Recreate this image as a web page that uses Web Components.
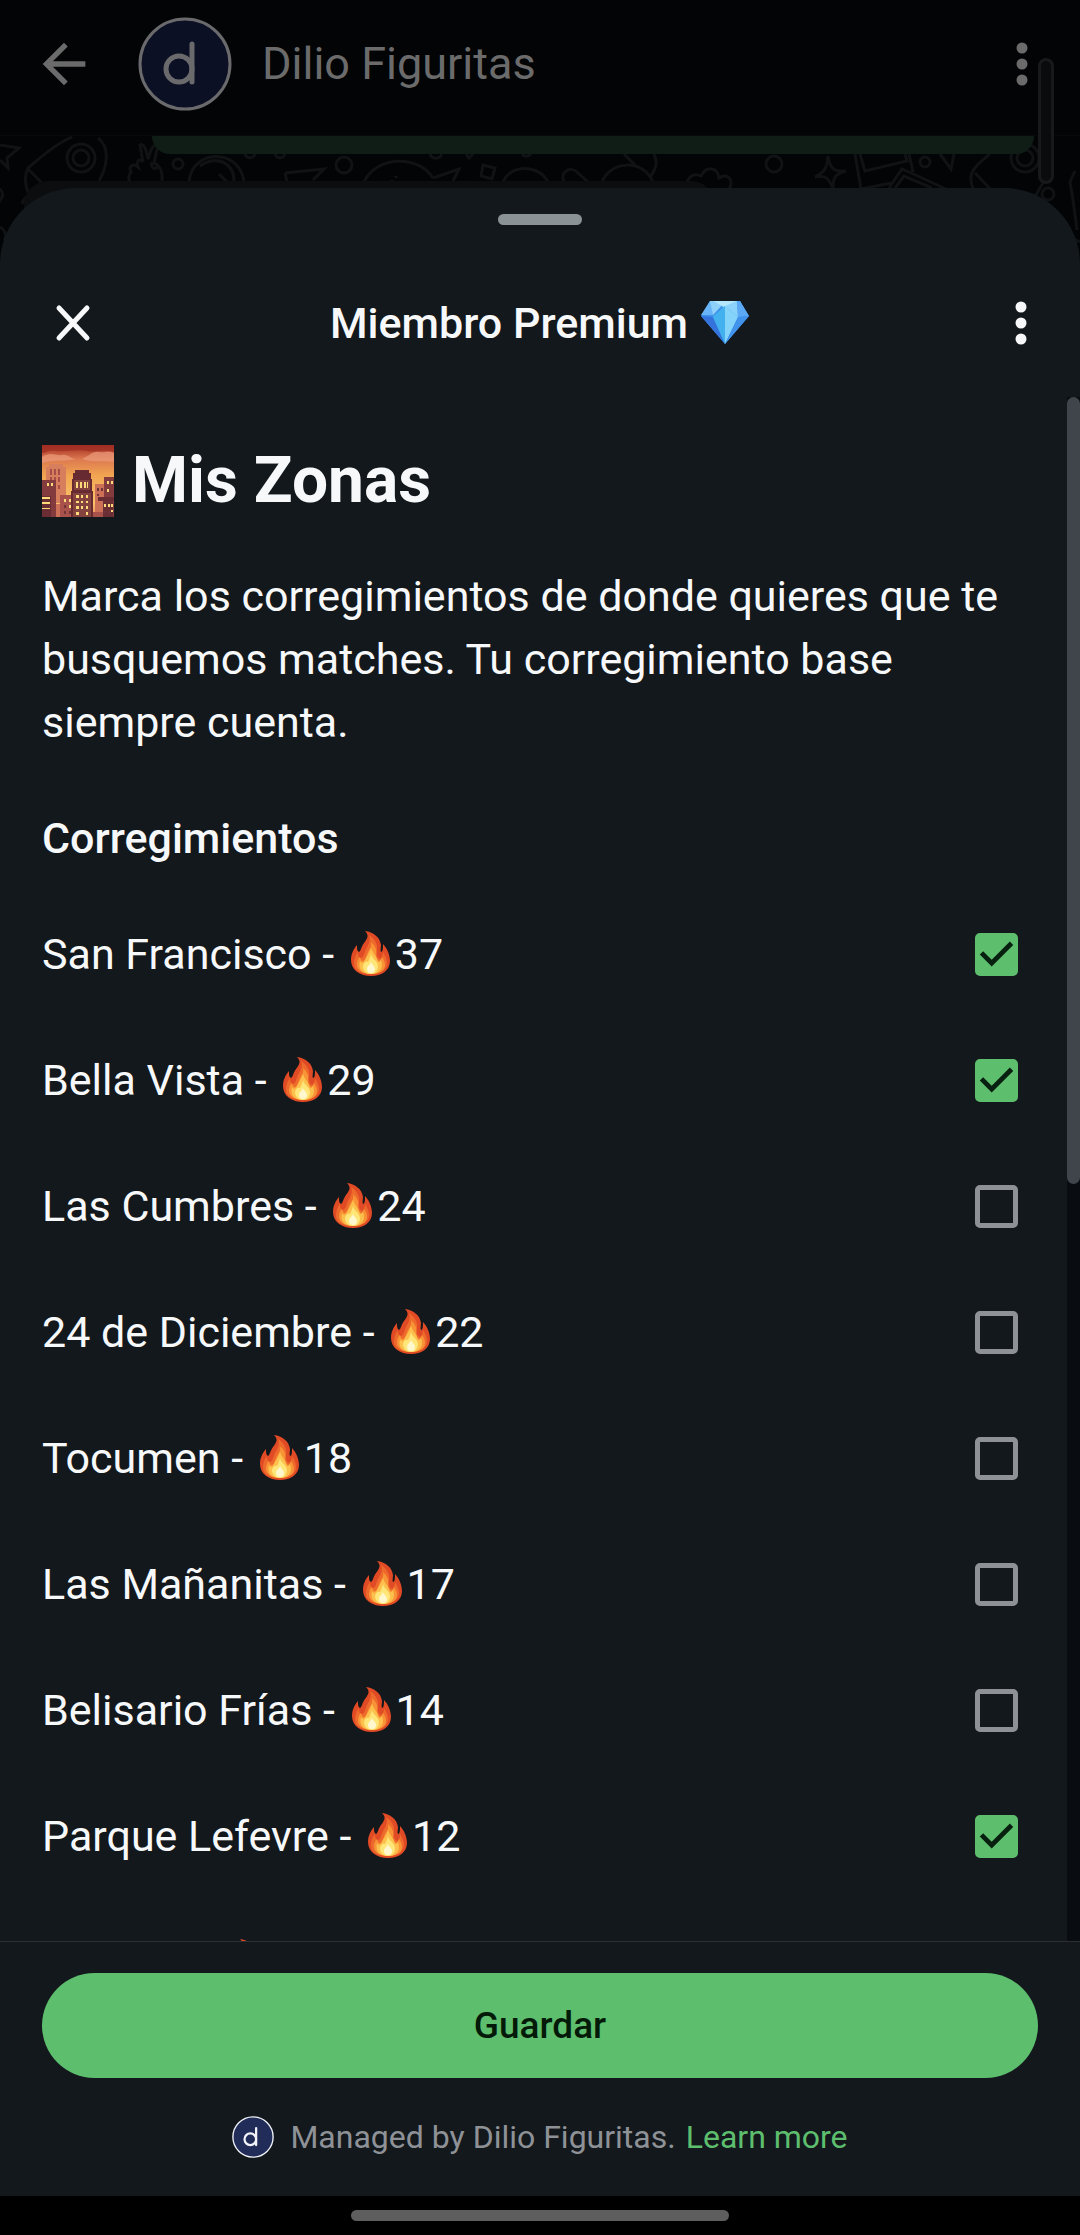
<!DOCTYPE html>
<html lang="es">
<head>
<meta charset="utf-8">
<meta name="viewport" content="width=device-width, initial-scale=1">
<title>Mis Zonas</title>
<style>
  html, body { height: 100%; }
  body {
    margin: 0;
    display: flex;
    flex-direction: column;
    background: #000;
    color: #f7f8fa;
    font-family: Roboto, "Noto Sans", sans-serif;
    font-size: 43px;
  }
</style>
</head>
<body>

<chat-bar nombre="Dilio Figuritas"></chat-bar>
<chat-fondo></chat-fondo>

<hoja-inferior>
  <span slot="titulo">Miembro Premium</span>
  <icono-emoji slot="titulo" tipo="diamante"></icono-emoji>

  <zonas-lista>
    <zona-item nombre="San Francisco" total="37" marcada></zona-item>
    <zona-item nombre="Bella Vista" total="29" marcada></zona-item>
    <zona-item nombre="Las Cumbres" total="24"></zona-item>
    <zona-item nombre="24 de Diciembre" total="22"></zona-item>
    <zona-item nombre="Tocumen" total="18"></zona-item>
    <zona-item nombre="Las Mañanitas" total="17"></zona-item>
    <zona-item nombre="Belisario Frías" total="14"></zona-item>
    <zona-item nombre="Parque Lefevre" total="12" marcada></zona-item>
    <zona-item nombre="Betania" total="11"></zona-item>
  </zonas-lista>

  <pie-hoja slot="pie" empresa="Dilio Figuritas">Guardar</pie-hoja>
</hoja-inferior>

<barra-sistema></barra-sistema>

<script>
// Pequeña base: cada elemento clona su plantilla en un shadow root abierto
class ElementoBase extends HTMLElement {
  constructor() {
    super();
    const plantilla = document.createElement('template');
    plantilla.innerHTML = this.constructor.html;
    this._shadow = this.attachShadow({ mode: 'open' });
    this._shadow.appendChild(plantilla.content.cloneNode(true));
  }
}

// ---------- iconos ----------

const SVG_FUEGO = `
  <svg class="fuego" viewBox="0 0 50 50" role="img" aria-label="fuego">
    <path fill="#e04a25" d="M20 2c8 1 15 6 16 14 0 3-1 5 0 7 2 0 2-4 2-8 4 4 7 11 7 17 0 9-8 15-19 15S6 41 6 31c0-6 2-10 6-15 0 4 0 6 2 7 2-1 2-5 5-9 4-5 5-8 1-12z"/>
    <path fill="#ee6a2c" d="M24 6c6 4 9 9 8 16 0 4 0 6 3 8 2-1 3-4 3-7 3 5 4 8 4 11 0 7-7 11-16 11S9 42 9 35c0-5 1-8 4-12 0 4 1 6 3 6 3-1 3-5 5-9 3-5 5-9 3-14z"/>
    <path fill="#f99436" d="M26 13c4 4 6 7 5 12 0 4 1 6 3 7 2-1 2-2 3-4 2 3 3 5 3 8 0 6-6 9-14 9s-14-4-14-9c0-4 1-6 3-8 1 3 1 4 3 4 3-1 3-5 5-9 2-3 4-6 3-10z"/>
    <path fill="#fdc04d" d="M26 19c2 6 6 8 7 14 2 0 2-1 3-2 3 8-1 14-10 14S13 40 15 32c1 2 2 2 4 1 2-5 5-8 7-14z"/>
    <path fill="#ffe679" d="M26 25c1 5 6 6 7 12 0 5-3 8-7 8s-8-3-8-8c1-4 3-5 5-4 1-2 2-4 3-8z"/>
    <path fill="#fff8cf" d="M26 33c1 3 4 4 4 7s-2 4-4 4-4-1-4-4 3-4 4-7z"/>
  </svg>
`;

const SVG_DIAMANTE = `
  <svg viewBox="0 0 50 50">
    <path fill="#3f92ea" d="M10 3h30l9 15-24 28L1 18z"/>
    <path fill="#67b5f8" d="M10 3h9l-6 14H1z"/>
    <path fill="#8dd0fa" d="M10 3h16L13 17z"/>
    <path fill="#b4e7fb" d="M14 3h23L25 10z"/>
    <path fill="#48c1f1" d="M25 8l13 11H13z"/>
    <path fill="#8bd3fb" d="M37 3l1 16-13-11z"/>
    <path fill="#5ba9f4" d="M37 3h3l9 15-11 1z"/>
    <path fill="#3473dc" d="M1 18l12 1 12 27z"/>
    <path fill="#42b1ee" d="M13 19l12-11v38z"/>
    <path fill="#83d3fb" d="M25 8l13 11-13 27z"/>
    <path fill="#4193eb" d="M38 19l11-1-24 28z"/>
  </svg>
`;

const SVG_CIUDAD = `
  <svg viewBox="0 0 72 72">
    <defs>
      <linearGradient id="cielo" x1="0" y1="0" x2="0" y2="1">
        <stop offset="0" stop-color="#a12c20"/><stop offset=".2" stop-color="#dd7950"/><stop offset=".42" stop-color="#f1a451"/><stop offset=".8" stop-color="#fbc469"/><stop offset="1" stop-color="#e78c60"/>
      </linearGradient>
    </defs>
    <path fill="url(#cielo)" d="M0 0h72v72H0z"/>
    <path fill="#9f2e22" d="M0 0h72v7c-12-3-17 1-27-1S24 7 14 6 4 9 0 8z" opacity=".7"/>
    <path fill="#e99a7a" d="M0 12c8-6 14-1 20-2s8 4 14 4c-9 3-20 0-34 4zM40 14c8-3 10-8 17-7s9-2 15 1v9c-10-2-20 1-32-3z" opacity=".75"/>
    <path fill="#d77e5c" d="M4 22h3v-3h14v3h3v36H4z"/>
    <path fill="#a54d46" d="M8 24h2v6H8zm4 0h2v6h-2zm4 0h2v6h-2zM8 32h2v5H8zm4 0h2v5h-2zm4 0h2v5h-2zM8 40h2v4H8zm4 0h2v4h-2zm4 0h2v4h-2z"/>
    <path fill="#cc7057" d="M53 39h9v33h-9zM10 59h10v13H10z"/>
    <path fill="#843b3e" d="M0 35h14v37H0zM62 32h10v40H62z"/>
    <path fill="#a9524b" d="M18 50h13v22H18zM50 67h12v5H50z"/>
    <path fill="#662a30" d="M33 25h14v3h2v6h1v12h1v26H29V46h1V34h1v-6h2z"/>
    <path fill="#85433f" d="M32 35h16v10H32zM31 48h18v24H31z"/>
    <path fill="#6a2d33" d="M0 51h9v21H0zM56 52h16v4h-1v16H61V56h-5z"/>
    <path fill="#ffdc7a" d="M34 37h2v6h-2zm4 0h2v6h-2zm4 0h2v6h-2zm3 0h1v6h-1zM34 50h3v3h-3zm5 0h2v3h-2zm5 0h2v3h-2zM34 56h3v2h-3zm5 0h2v2h-2zm5 0h2v2h-2zM34 61h3v3h-3zm5 0h2v3h-2zm5 0h2v3h-2zM34 67h3v3h-3zm10 0h2v3h-2zM0 52h8v2H0zm0 5h8v2H0zm0 6h8v1H0zM5 38h2v3H5zm4 0h2v3H9zM22 54h2v3h-2zm5 0h2v3h-2zm0 6h2v3h-2zM65 36h2v3h-2zm4 0h2v3h-2zm-4 8h2v3h-2zm-3 15h2v3h-2zm4 0h2v3h-2zm3 0h2v3h-2zm0 6h2v2h-2z"/>
    <path fill="#713439" d="M22 60h2v3h-2zm0 6h2v3h-2zm5 0h2v3h-2zM55 43h2v3h-2zm4 0h2v3h-2zm-4 6h2v2h-2zM61 66h3v2h-3zm5 0h2v2h-2z"/>
  </svg>
`;

const EMOJIS = {
  diamante: { nombre: 'diamante', svg: SVG_DIAMANTE },
  ciudad: { nombre: 'ciudad al atardecer', svg: SVG_CIUDAD }
};

class IconoEmoji extends HTMLElement {
  constructor() {
    super();
    this._shadow = this.attachShadow({ mode: 'open' });
  }

  connectedCallback() {
    const emoji = EMOJIS[this.getAttribute('tipo')];
    this.setAttribute('role', 'img');
    this.setAttribute('aria-label', emoji.nombre);
    this._shadow.innerHTML = `
      <style>
        :host { display: block; flex: none; width: 50px; height: 50px; }
        :host([tipo="ciudad"]) { width: 72px; height: 72px; }
        svg { display: block; width: 100%; height: 100%; }
      </style>
      ${emoji.svg}
    `;
  }
}
customElements.define('icono-emoji', IconoEmoji);

class LogoDilio extends ElementoBase {
  static html = `
    <style>
      :host { display: block; flex: none; width: 42px; height: 42px; }
      svg { display: block; width: 100%; height: 100%; }
      .disco { fill: var(--logo-fondo, #212c58); stroke: var(--logo-trazo, #f2f4fa); stroke-width: 3; }
      .marca { fill: none; stroke: var(--logo-trazo, #f2f4fa); stroke-width: 5; stroke-linecap: round; }
    </style>
    <svg viewBox="0 0 94 94" aria-hidden="true">
      <circle class="disco" cx="47" cy="47" r="45"/>
      <g class="marca"><circle cx="41" cy="52" r="13"/><line x1="54" y1="27" x2="54" y2="65"/></g>
    </svg>
  `;
}
customElements.define('logo-dilio', LogoDilio);

class BotonMenu extends ElementoBase {
  static html = `
    <style>
      :host { display: block; flex: none; }
      button { display: block; padding: 0; border: 0; background: none; color: inherit; cursor: pointer; }
      svg { display: block; width: 64px; height: 64px; }
    </style>
    <button type="button" aria-label="Más opciones">
      <svg viewBox="0 0 64 64" fill="currentColor">
        <circle cx="32" cy="16" r="5.5"/><circle cx="32" cy="32" r="5.5"/><circle cx="32" cy="48" r="5.5"/>
      </svg>
    </button>
  `;
}
customElements.define('boton-menu', BotonMenu);

// ---------- chat oscurecido detrás de la hoja ----------

class ChatBar extends ElementoBase {
  static html = `
    <style>
      :host {
        --logo-fondo: #0c1024;
        --logo-trazo: #6a6a6d;
        display: flex;
        flex: none;
        align-items: center;
        box-sizing: border-box;
        height: 136px;
        padding: 0 26px 8px 32px;
        background: #020406;
        color: #6b6b6b;
        border-bottom: 1px solid #07090b;
      }
      button { padding: 0; border: 0; background: none; color: inherit; cursor: pointer; }
      button svg { display: block; width: 64px; height: 64px; }
      logo-dilio { width: 94px; height: 94px; margin: 0 30px 0 42px; }
      .nombre { flex: 1; font-size: 45px; line-height: 64px; }
    </style>
    <button type="button" aria-label="Volver">
      <svg viewBox="0 0 24 24" fill="currentColor"><path d="M20 11H7.830l5.590-5.590L12 4l-8 8 8 8 1.410-1.410L7.830 13H20v-2z"/></svg>
    </button>
    <logo-dilio></logo-dilio>
    <span class="nombre"></span>
    <boton-menu></boton-menu>
  `;

  connectedCallback() {
    this._shadow.querySelector('.nombre').textContent = this.getAttribute('nombre') || '';
  }
}
customElements.define('chat-bar', ChatBar);

class ChatFondo extends ElementoBase {
  static html = `
    <style>
      :host {
        display: flex;
        flex: none;
        flex-direction: column;
        position: relative;
        height: 130px;
        background: #020406;
        overflow: hidden;
      }
      /* los dibujos quedan debajo de las burbujas */
      .dibujos { position: absolute; inset: 0; width: 100%; height: 100%; }
      .enviado { position: relative; height: 18px; margin: 0 46px 27px 152px; border-radius: 0 0 30px 30px; background: #101d17; }
      .recibido { position: relative; height: 85px; width: 64%; margin-left: 24px; border-radius: 24px 24px 0 0; background: #0b0d0f; }
    </style>
    <svg class="dibujos" viewBox="0 0 1080 130" preserveAspectRatio="xMidYMin slice" fill="none" stroke="#101214" stroke-width="3" aria-hidden="true">
      <path d="M0 9l19 3-12 10 1 10-8-8M72 1C56 8 42 20 28 32c-4 8-3 16 0 24 4 8 12 7 18 2M98 2c12 9 10 27 1 43M28 33l24 24"/>
      <circle cx="81" cy="22" r="14"/><circle cx="81" cy="22" r="8"/>
      <path d="M143 26l-3-17c4-2 6 4 8 14 3-11 6-16 10-14l-4 18c5 2 9 8 8 18M143 26c-4-5-7 0-5 5-5-4-10-1-7 5-3 3-3 8 0 11M152 26c-2 6 3 8 6 5"/>
      <circle cx="178" cy="28" r="5"/><path d="M189 46c3-34 51-34 55 0M200 30c16-11 34-4 34 15M219 38l8 8"/>
      <path d="M285 37l39-4-11 11M285 37l2 9"/><circle cx="344" cy="29" r="8"/>
      <path d="M364 46c12-26 54-28 69-4M433 42l26-9-6 12M392 44v1M396 40v2"/>
      <path d="M483 29l12 3-3 11-11-3zM503 46c7-18 36-18 45 0M245 18c2 5 8 5 10 0M275 18c2 5 8 5 10 0M430 18c2 6 10 5 12 0M466 18l3 4 4-4M522 18c3 4 8 2 9-1"/>
      <path d="M564 46c-5-10 7-17 14-9l10 9M602 46c8-21 41-24 51 0M624 18l12 12M654 18c4 9 2 15-4 23M687 46c3-7 8-9 14-6 5-10 16-10 18 2 10-7 16 5 9 12"/>
      <circle cx="774" cy="28" r="8"/><path d="M828 20c2 13 6 16 18 15-11 3-13 6-13 18-4-11-7-14-18-12 10-5 12-9 13-21z"/>
      <path d="M855 18l6 35M860 18l5 17 42-10-2-7M909 18l4 18M861 53l30-6M889 52l13-19 44 20M895 52l9-12 28 12"/>
      <circle cx="925" cy="26" r="5"/><path d="M940 18l11 15 3-15M990 18c-24 18-20 25-17 35M975 37l23 24M1044 45l-15 26M1075 35l-5 11 3 18 4 30M1070 101l10 5"/>
      <circle cx="1025" cy="22" r="14"/><circle cx="1025" cy="22" r="8"/><circle cx="1048" cy="58" r="6"/>
      <path d="M22 68c3-10 11-9 15-5M0 53c5 5 2 9-1 13M0 91c6 4 7 9 4 13"/>
    </svg>
    <div class="enviado"></div>
    <div class="recibido"></div>
  `;
}
customElements.define('chat-fondo', ChatFondo);

// ---------- hoja ----------

class HojaInferior extends ElementoBase {
  static html = `
    <style>
      :host {
        display: flex;
        flex: 1;
        flex-direction: column;
        position: relative;
        min-height: 0;
        margin-top: -78px;
        border-radius: 76px 76px 0 0;
        background: #13181c;
      }
      .asa { flex: none; align-self: center; width: 84px; height: 11px; margin: 26px 0 24px; border-radius: 6px; background: #8b9296; }
      /* indicador de desplazamiento del chat, asoma sobre la barra */
      .riel { position: absolute; top: -130px; right: 26px; box-sizing: border-box; width: 16px; height: 126px; border: 3px solid #17191a; border-radius: 8px; background: #090b0c; }
      header { display: grid; grid-template-columns: 64px 1fr 64px; align-items: center; flex: none; height: 148px; padding: 0 27px 0 41px; }
      button { padding: 0; border: 0; background: none; color: inherit; cursor: pointer; }
      button svg { display: block; width: 64px; height: 64px; }
      .titulo { display: flex; align-items: center; justify-content: center; gap: 12px; margin: 0; padding-right: 14px; font-size: 43px; line-height: 63px; font-weight: 500; }
      main { flex: 1; min-height: 0; display: flex; }
    </style>
    <div class="riel"></div>
    <div class="asa"></div>
    <header>
      <button type="button" aria-label="Cerrar">
        <svg viewBox="0 0 64 64" stroke="currentColor" stroke-width="5" stroke-linecap="round"><path d="M18 17l28 30M46 17l-28 30"/></svg>
      </button>
      <h2 class="titulo"><slot name="titulo"></slot></h2>
      <boton-menu></boton-menu>
    </header>
    <main><slot></slot></main>
    <slot name="pie"></slot>
  `;
}
customElements.define('hoja-inferior', HojaInferior);

class ZonasLista extends ElementoBase {
  static html = `
    <style>
      :host { display: flex; flex: 1; min-height: 0; min-width: 0; }
      .contenido { flex: 1; min-width: 0; overflow-y: auto; scrollbar-width: none; box-sizing: border-box; padding: 42px 49px 0 42px; }
      h1 { display: flex; align-items: center; gap: 18px; margin: 0 0 42px; font-size: 64px; line-height: 84px; font-weight: 700; }
      p { margin: 0 0 53px; line-height: 63px; }
      h2 { margin: 0 0 21px; font-size: 43px; line-height: 63px; font-weight: 500; }
      .carril { flex: none; width: 13px; background: #090d11; }
      .pulgar { height: 51%; border-radius: 7px; background: #3f454b; }
    </style>
    <div class="contenido">
      <h1><icono-emoji tipo="ciudad"></icono-emoji><span>Mis Zonas</span></h1>
      <p>Marca los corregimientos de donde quieres que te busquemos matches. Tu corregimiento base siempre cuenta.</p>
      <h2>Corregimientos</h2>
      <slot></slot>
    </div>
    <div class="carril"><div class="pulgar"></div></div>
  `;
}
customElements.define('zonas-lista', ZonasLista);

class ZonaItem extends ElementoBase {
  static html = `
    <style>
      :host { display: block; }
      label { display: grid; grid-template-columns: auto auto auto 1fr; align-items: center; height: 126px; line-height: 63px; cursor: pointer; }
      .nombre { white-space: pre; }
      .fuego { display: block; width: 50px; height: 50px; }
      .caja { display: grid; justify-self: end; width: 43px; height: 43px; }
      input, .marca { grid-area: 1 / 1; width: 43px; height: 43px; }
      input { appearance: none; box-sizing: border-box; margin: 0; border: 5px solid #8e9297; border-radius: 5px; }
      input:checked { border-color: #5dbe6e; background: #5dbe6e; }
      .marca { display: none; fill: #08200f; pointer-events: none; }
      input:checked + .marca { display: block; }
    </style>
    <label>
      <span class="nombre"></span>
      ${SVG_FUEGO}
      <span class="total"></span>
      <span class="caja">
        <input type="checkbox">
        <svg class="marca" viewBox="0 0 18 18" aria-hidden="true"><path d="M7 14L2 9l1.410-1.410L7 11.170l7.590-7.590L16 5z"/></svg>
      </span>
    </label>
  `;

  connectedCallback() {
    this._shadow.querySelector('.nombre').textContent = this.getAttribute('nombre') + ' - ';
    this._shadow.querySelector('.total').textContent = this.getAttribute('total');
    const casilla = this._shadow.querySelector('input');
    casilla.checked = this.hasAttribute('marcada');
    casilla.addEventListener('change', () => this.toggleAttribute('marcada', casilla.checked));
  }
}
customElements.define('zona-item', ZonaItem);

class PieHoja extends ElementoBase {
  static html = `
    <style>
      :host { display: block; flex: none; padding: 31px 42px 38px; border-top: 1px solid #2b3034; }
      button { display: block; width: 100%; height: 105px; padding: 0; border: 0; border-radius: 53px; background: #5dbe6e; color: #041a08; font-family: inherit; font-size: 37px; font-weight: 500; cursor: pointer; }
      .gestion { display: flex; align-items: center; justify-content: center; margin-top: 38px; font-size: 32px; line-height: 42px; color: #8e9297; }
      logo-dilio { margin-right: 16px; }
      a { margin-left: 10px; color: #5dbe6e; text-decoration: none; }
    </style>
    <button type="button"><slot></slot></button>
    <div class="gestion">
      <logo-dilio></logo-dilio>
      <span class="texto"></span>
      <a href="#info">Learn more</a>
    </div>
  `;

  connectedCallback() {
    this._shadow.querySelector('.texto').textContent = `Managed by ${this.getAttribute('empresa')}.`;
  }
}
customElements.define('pie-hoja', PieHoja);

class BarraSistema extends ElementoBase {
  static html = `
    <style>
      :host { display: flex; flex: none; align-items: center; justify-content: center; height: 39px; background: #000; }
      .gesto { width: 35%; height: 11px; border-radius: 6px; background: #5e5e5e; }
    </style>
    <div class="gesto"></div>
  `;
}
customElements.define('barra-sistema', BarraSistema);
</script>
</body>
</html>
